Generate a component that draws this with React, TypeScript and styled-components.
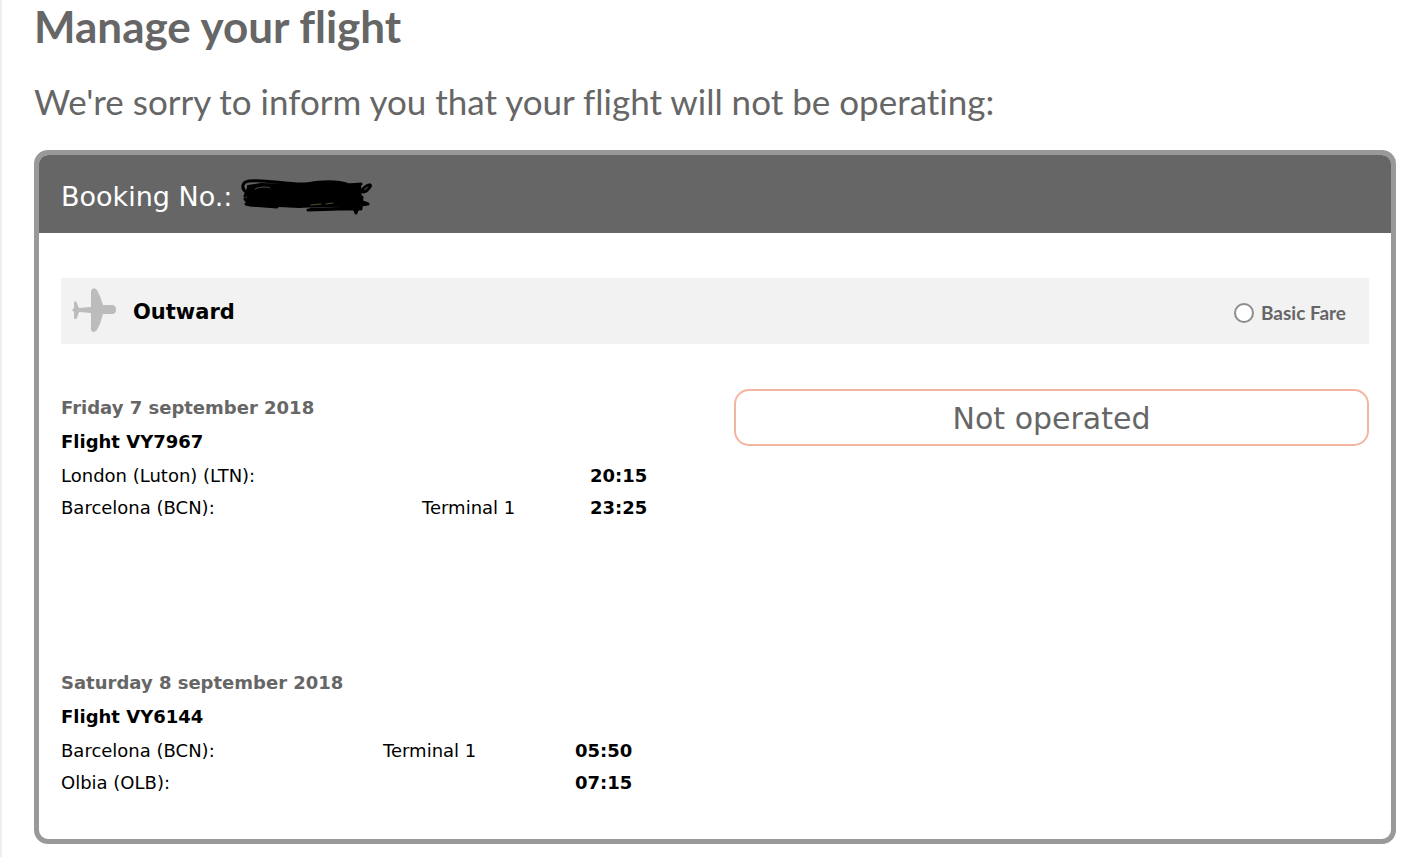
import React from "react";
import styled, { createGlobalStyle } from "styled-components";

const GlobalStyle = createGlobalStyle`
  * { box-sizing: border-box; }
  body {
    margin: 0;
    background: #fff;
    color: #000;
    font-family: Verdana, "DejaVu Sans", sans-serif;
    font-size: 18px;
  }
`;

const Page = styled.main`
  min-height: 100vh;
  padding: 0 31px 13px 32px;
  border-left: 2px solid #eee;
`;

const Title = styled.h1`
  margin: 0;
  padding-top: 2px;
  font: 700 44px/48px Lato, sans-serif;
  font-variant-ligatures: none;
  color: #666;
`;

const Lead = styled.h2`
  margin: 27px 0 25px;
  font: 400 35px/48px Lato, sans-serif;
  font-variant-ligatures: none;
  color: #666;
`;

const Card = styled.section`
  border: 5px solid #999;
  border-radius: 14px;
  overflow: hidden;
`;

const CardHeader = styled.header`
  display: flex;
  align-items: center;
  gap: 9px;
  height: 78px;
  padding: 5px 22px 0;
  background: #666;
  color: #fff;
  font-size: 27px;
`;

const Redaction = styled.svg`
  width: 132px;
  height: 38px;
`;

const CardBody = styled.div`
  padding: 45px 22px 40px;
`;

const DirectionBar = styled.div`
  display: flex;
  align-items: center;
  height: 66px;
  padding: 0 23px 0 10px;
  background: #f2f2f2;
`;

const PlaneIcon = styled.svg`
  width: 46px;
  height: 46px;
`;

const Direction = styled.h3`
  margin: 0 auto 0 16px;
  padding-top: 2px;
  font-size: 21px;
  line-height: 28px;
`;

const Fare = styled.label`
  display: flex;
  align-items: center;
  gap: 7px;
  padding-top: 3px;
  font: 700 19px/24px Lato, sans-serif;
  color: #666;
`;

const Radio = styled.input`
  appearance: none;
  width: 20px;
  height: 20px;
  margin: 0;
  border: 2px solid #8c8c8c;
  border-radius: 50%;
  background: #fff;
  &:checked { box-shadow: inset 0 0 0 4px #fff; background: #666; }
`;

const Journey = styled.div`
  display: grid;
  grid-template-columns: 1fr 1fr;
  column-gap: 38px;
  align-items: start;
  padding-top: 45px;
`;

const Flights = styled.div`
  display: grid;
  gap: 142px;
  padding-top: 2px;
`;

const FlightDate = styled.h4`
  margin: 0;
  font-size: 18px;
  line-height: 34px;
  color: #666;
`;

const FlightNumber = styled.h5`
  margin: 0;
  font-size: 18px;
  line-height: 34px;
`;

const Stops = styled.table`
  width: 100%;
  margin-top: 1px;
  border-collapse: collapse;
  table-layout: fixed;
  line-height: 32px;
`;

const Col = styled.col<{ $width?: number }>`
  width: ${(p) => (p.$width ? `${p.$width}px` : "auto")};
`;

const Place = styled.td`
  padding: 0;
`;

const Time = styled.td`
  padding: 0;
  font-weight: 700;
`;

const Status = styled.p`
  margin: 0;
  padding-top: 2px;
  border: 2px solid #f2b5a0;
  border-radius: 15px;
  font-size: 30px;
  line-height: 51px;
  text-align: center;
  color: #666;
`;

type Stop = { place: string; terminal?: string; time: string };
type Flight = {
  date: string;
  number: string;
  columns: [number, number];
  stops: Stop[];
};

const flights: Flight[] = [
  {
    date: "Friday 7 september 2018",
    number: "Flight VY7967",
    columns: [361, 168],
    stops: [
      { place: "London (Luton) (LTN):", time: "20:15" },
      { place: "Barcelona (BCN):", terminal: "Terminal 1", time: "23:25" },
    ],
  },
  {
    date: "Saturday 8 september 2018",
    number: "Flight VY6144",
    columns: [322, 192],
    stops: [
      { place: "Barcelona (BCN):", terminal: "Terminal 1", time: "05:50" },
      { place: "Olbia (OLB):", time: "07:15" },
    ],
  },
];

function FlightDetails({ date, number, columns, stops }: Flight) {
  return (
    <article>
      <FlightDate>{date}</FlightDate>
      <FlightNumber>{number}</FlightNumber>
      <Stops>
        <colgroup>
          <Col $width={columns[0]} />
          <Col $width={columns[1]} />
          <Col />
        </colgroup>
        <tbody>
          {stops.map((s) => (
            <tr key={s.place}>
              <Place>{s.place}</Place>
              <Place>{s.terminal}</Place>
              <Time>{s.time}</Time>
            </tr>
          ))}
        </tbody>
      </Stops>
    </article>
  );
}

export default function App() {
  return (
    <>
      <GlobalStyle />
      <Page>
        <Title>Manage your flight</Title>
        <Lead>We're sorry to inform you that your flight will not be operating:</Lead>
        <Card>
          <CardHeader>
            <span>Booking No.:</span>
            <Redaction viewBox="0 0 132 38" fill="none" stroke="#000" strokeLinecap="round" strokeLinejoin="round" aria-hidden="true">
              <path d="M7 8 L20 6 L58 7 L76 4 L92 4 L104 7 L119 6 L120 24 L116 30 L100 29 L78 28 L58 29 L38 28 L6 27Z" fill="#000" strokeWidth="2" />
              <path d="M5 14 C0 10 1 4 8 3 C27 1 44 7 66 6 C82 3 97 3 108 7 L120 6" strokeWidth="3" />
              <path d="M4 18 L8 9 M4 21 L9 27 L36 29 L5 26 L28 21 M67 32 L98 31 L113 28 L123 25 M70 31 L118 31" strokeWidth="3" />
              <path d="M121 12 C127 5 132 6 128 10 C126 13 123 15 120 13 M116 22 L127 26 L119 27 M112 28 L115 35 L119 24 M121 19 L120 31 M104 29 L118 20" strokeWidth="3" />
              <path d="M14 11 C20 8 27 9 29 10" stroke="#4d4d4d" strokeWidth="1" />
              <path d="M70 27 L80 26 M85 26 L92 25" stroke="#5a5038" strokeWidth="1" />
            </Redaction>
          </CardHeader>
          <CardBody>
            <DirectionBar>
              <PlaneIcon viewBox="0 0 46 46" aria-hidden="true">
                <path fill="#bcbcbc" d="M20 3 Q22 -2 26 2 Q30 9 32 17 H41 Q45 17 45 22 Q45 26 41 26 H32 Q30 35 26 42 Q22 46 20 42 V25 L8 24 L6 30 Q3 33 3 29 L3 24 L1 22 L3 20 L3 14 Q5 12 6 15 L8 20 L20 19Z" />
              </PlaneIcon>
              <Direction>Outward</Direction>
              <Fare>
                <Radio type="radio" name="fare" />
                Basic Fare
              </Fare>
            </DirectionBar>
            <Journey>
              <Flights>
                {flights.map((f) => (
                  <FlightDetails key={f.number} {...f} />
                ))}
              </Flights>
              <Status>Not operated</Status>
            </Journey>
          </CardBody>
        </Card>
      </Page>
    </>
  );
}
